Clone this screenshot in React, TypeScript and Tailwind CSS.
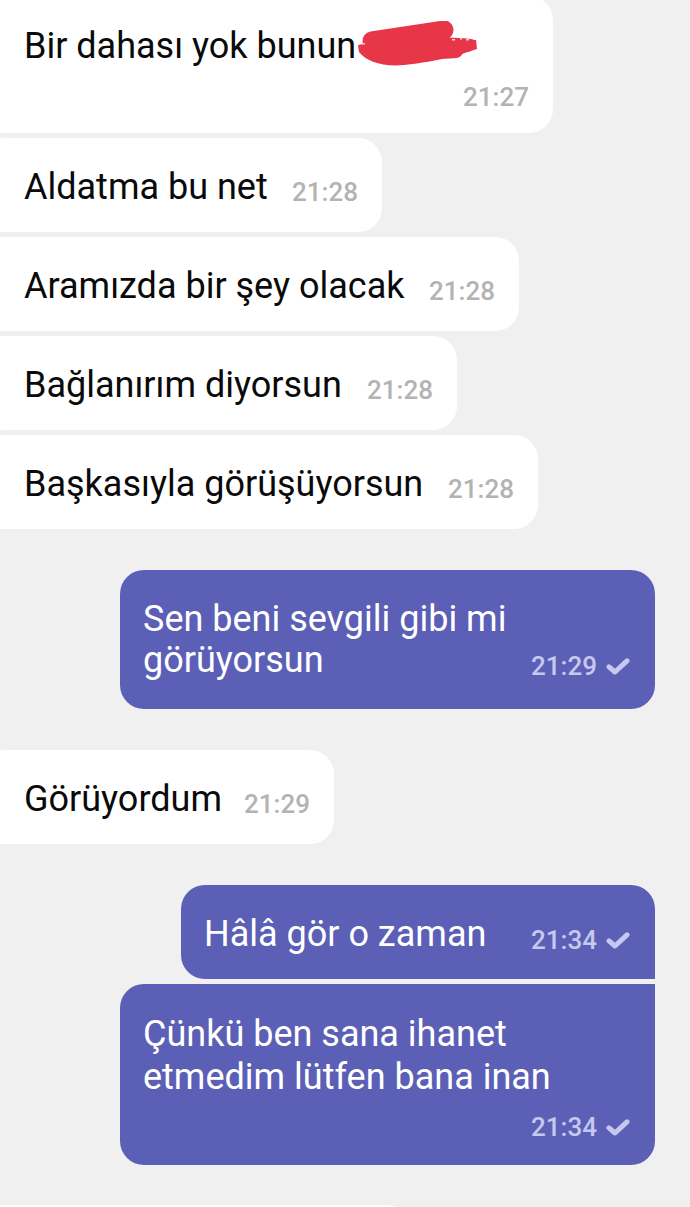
import React from "react";

const Check = () => (
  <svg width="24" height="17" viewBox="0 0 24 17" className="ml-[9px] shrink-0">
    <path
      d="M3 8.8 L9 14 L21 2.8"
      fill="none"
      stroke="currentColor"
      strokeWidth="5"
      strokeLinecap="round"
      strokeLinejoin="round"
    />
  </svg>
);

const Scribble = () => (
  <svg width="124" height="46" viewBox="0 0 124 46" className="inline-block align-top ml-[0px] mt-[-5px]">
    <path d="M16 20 L88 9" stroke="#e63648" strokeWidth="19" strokeLinecap="round" fill="none" />
    <path
      d="M2 24 C 30 16, 96 14, 120 19 L 121 28 C 104 34, 84 40, 48 44 C 26 46, 10 40, 3 31 Z"
      fill="#e63648"
    />
    <path d="M30 32 C 50 30, 80 32, 100 30" stroke="#e63648" strokeWidth="14" strokeLinecap="round" fill="none" />
    <rect x="96" y="18" width="3" height="1.5" fill="#fff" opacity="0.8" />
    <rect x="104" y="17" width="2" height="1.5" fill="#fff" opacity="0.8" />
    <rect x="110" y="18" width="3" height="1.5" fill="#fff" opacity="0.7" />
    <rect x="117" y="17" width="3" height="2" fill="#fff" opacity="0.7" />
    <rect x="1" y="22" width="8" height="1.5" fill="#fff" opacity="0.7" />
  </svg>
);

const timeIn = "text-[26px] font-medium text-[#b3b3b3] leading-[32px] whitespace-nowrap translate-y-[2px]";
const timeOut = "text-[26px] font-medium text-[#c7c8ee] leading-[32px] whitespace-nowrap translate-y-[3px]";

function In({ w, text, time }: { w: string; text: string; time: string }) {
  return (
    <div
      className={`bg-white rounded-[24px] ml-[-20px] pl-[44px] pr-[24px] pt-[29px] pb-[24px] flex items-baseline justify-between ${w}`}
    >
      <span className="text-[36px] leading-[41px] text-[#0a0a0a]">{text}</span>
      <span className={timeIn}>{time}</span>
    </div>
  );
}

export default function App() {
  return (
    <div
      className="w-[690px] h-[1207px] overflow-hidden bg-[#f0f0f0] flex flex-col"
      style={{ fontFamily: "Roboto, 'Noto Sans', sans-serif" }}
    >
      {/* first incoming, cut at top */}
      <div className="mt-[-4px] bg-white rounded-[24px] ml-[-20px] w-[573px] pl-[44px] pr-[24px] pt-[30px] pb-[22px] flex flex-col">
        <div className="text-[36px] leading-[41px] text-[#0a0a0a] whitespace-nowrap">
          Bir dahası yok bunun
          <Scribble />
        </div>
        <div className="flex justify-end mt-[12px]">
          <span className={timeIn}>21:27</span>
        </div>
      </div>

      <div className="mt-[5px] flex flex-col gap-[5px]">
        <In w="w-[402px]" text="Aldatma bu net" time="21:28" />
        <In w="w-[539px]" text="Aramızda bir şey olacak" time="21:28" />
        <In w="w-[477px]" text="Bağlanırım diyorsun" time="21:28" />
        <In w="w-[558px]" text="Başkasıyla görüşüyorsun" time="21:28" />
      </div>

      {/* outgoing 1 */}
      <div className="mt-[41px] ml-[120px] w-[535px] bg-[#5c5fb6] rounded-[24px] pl-[23px] pr-[25px] pt-[29px] pb-[28px] text-white">
        <div className="text-[36px] leading-[41px]">Sen beni sevgili gibi mi</div>
        <div className="flex items-baseline justify-between">
          <span className="text-[36px] leading-[41px]">görüyorsun</span>
          <span className={`${timeOut} flex items-center`}>
            21:29
            <Check />
          </span>
        </div>
      </div>

      <div className="mt-[41px]">
        <In w="w-[354px]" text="Görüyordum" time="21:29" />
      </div>

      {/* outgoing 2 */}
      <div className="mt-[41px] ml-[181px] w-[474px] bg-[#5c5fb6] rounded-[24px] rounded-br-none pl-[23px] pr-[25px] pt-[29px] pb-[24px] text-white flex items-baseline justify-between">
        <span className="text-[36px] leading-[41px]">Hâlâ gör o zaman</span>
        <span className={`${timeOut} flex items-center`}>
          21:34
          <Check />
        </span>
      </div>

      {/* outgoing 3 */}
      <div className="mt-[5px] ml-[120px] w-[535px] bg-[#5c5fb6] rounded-[24px] rounded-tr-none pl-[23px] pr-[25px] pt-[29px] pb-[25px] text-white flex flex-col">
        <div className="text-[36px] leading-[43px]">Çünkü ben sana ihanet</div>
        <div className="text-[36px] leading-[43px]">etmedim lütfen bana inan</div>
        <div className="flex justify-end mt-[9px]">
          <span className={`${timeOut} flex items-center`}>
            21:34
            <Check />
          </span>
        </div>
      </div>

      {/* next incoming, cut at bottom */}
      <div className="mt-[40px] ml-[-20px] w-[430px] h-[94px] shrink-0 bg-white rounded-[24px]" />
    </div>
  );
}
